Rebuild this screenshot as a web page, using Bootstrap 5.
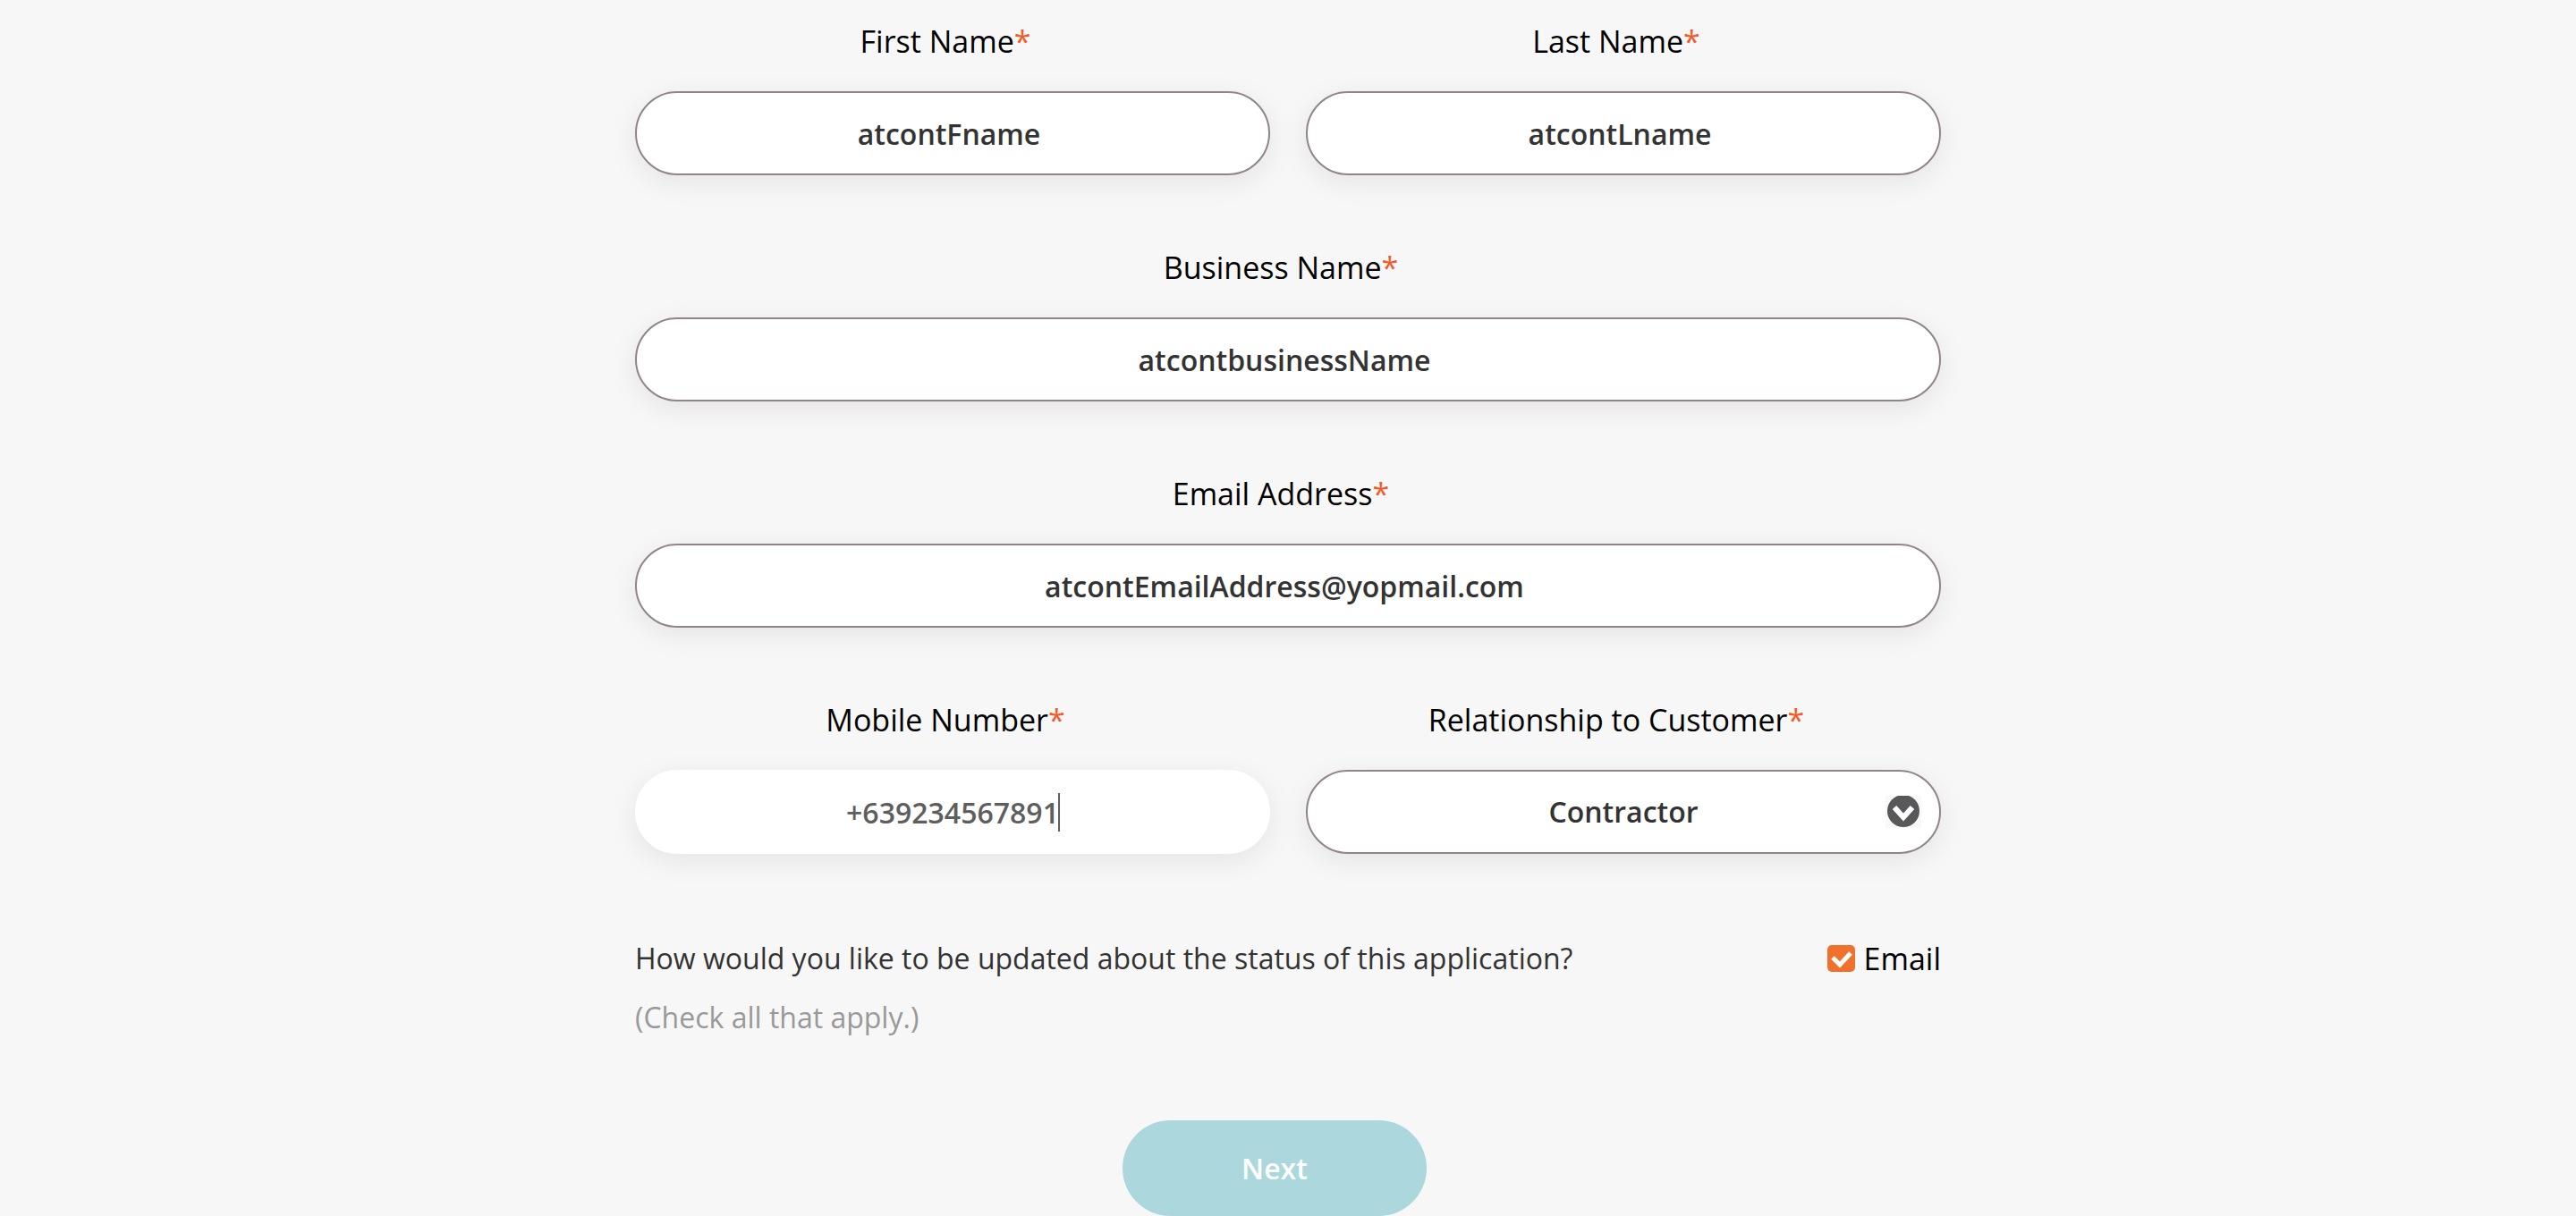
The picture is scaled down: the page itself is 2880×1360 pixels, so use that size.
<!DOCTYPE html>
<html lang="en">
<head>
<meta charset="utf-8">
<meta name="viewport" content="width=device-width, initial-scale=1">
<title>Applicant details</title>
<link rel="stylesheet" href="https://cdn.jsdelivr.net/npm/bootstrap@5.3.0/dist/css/bootstrap.min.css">
<style>
  body { background: #f7f7f7; color: #000; font-family: "Open Sans", "Noto Sans", sans-serif; font-size: 32px; line-height: 48px; }
  .form-shell { max-width: 1508px; padding: 22px 24px 0; }
  .field-grid { --bs-gutter-x: 40px; --bs-gutter-y: 79px; }
  .field-label { display: block; margin-bottom: 32px; padding-right: 16px; font-size: 34px; text-align: center; }
  .required { color: #f15a29; }
  .pill-field, .pill-field:focus {
    height: 94px; padding: 0 48px; border: 2px solid #918585; border-radius: 47px; background: #fff;
    box-shadow: 0 8px 32px rgba(0, 0, 0, .08); color: #333; font-size: 32px; font-weight: 600;
    line-height: 48px; text-align: center; text-align-last: center;
  }
  .pill-text { padding-right: 56px; }
  .pill-active, .pill-active:focus { border-color: #fff; color: #5e5e5e; }
  .text-caret { position: absolute; top: 26px; left: calc(50% + 118px); width: 2px; height: 43px; background: #5e5e5e; pointer-events: none; }
  .select-arrow { position: absolute; top: 29px; right: 22px; width: 40px; height: 36px; pointer-events: none; }
  .updates { margin-top: 93px; }
  .question { color: #333; margin-bottom: 18px; }
  .hint { color: #999; }
  .email-option { gap: 10px; font-size: 34px; }
  .email-option .form-check-input { width: 31px; height: 30px; margin: 0; border: 0; border-radius: 5px; background-color: #f0712c; background-size: 31px 30px; }
  .email-option .form-check-input:checked { background-image: url("data:image/svg+xml,%3Csvg xmlns='http://www.w3.org/2000/svg' viewBox='0 0 31 30'%3E%3Cpath d='M6 14l8 8L26 9' fill='none' stroke='%23fff' stroke-width='5'/%3E%3C/svg%3E"); }
  .actions { margin-top: 91px; padding-right: 30px; }
  .next-btn, .next-btn:disabled { width: 340px; height: 107px; border: 0; border-radius: 54px; background: #acd8dd; color: #fff; font-size: 32px; font-weight: 600; opacity: 1; }
</style>
</head>
<body>
<main class="container-fluid form-shell">
  <form>
    <div class="row field-grid">
      <div class="col-6">
        <label class="field-label" for="firstName">First Name<span class="required">*</span></label>
        <input class="form-control pill-field pill-text" id="firstName" type="text" value="atcontFname">
      </div>
      <div class="col-6">
        <label class="field-label" for="lastName">Last Name<span class="required">*</span></label>
        <input class="form-control pill-field pill-text" id="lastName" type="text" value="atcontLname">
      </div>
      <div class="col-12">
        <label class="field-label" for="businessName">Business Name<span class="required">*</span></label>
        <input class="form-control pill-field pill-text" id="businessName" type="text" value="atcontbusinessName">
      </div>
      <div class="col-12">
        <label class="field-label" for="email">Email Address<span class="required">*</span></label>
        <input class="form-control pill-field pill-text" id="email" type="email" value="atcontEmailAddress@yopmail.com">
      </div>
      <div class="col-6">
        <label class="field-label" for="mobile">Mobile Number<span class="required">*</span></label>
        <div class="position-relative">
          <input class="form-control pill-field pill-active" id="mobile" type="tel" value="+639234567891">
          <span class="text-caret"></span>
        </div>
      </div>
      <div class="col-6">
        <label class="field-label" for="relationship">Relationship to Customer<span class="required">*</span></label>
        <div class="position-relative">
          <select class="form-select pill-field" id="relationship">
            <option selected>Contractor</option>
          </select>
          <svg class="select-arrow" viewBox="0 0 40 36" aria-hidden="true">
            <rect width="40" height="36" fill="#f9f9f9"/>
            <circle cx="20" cy="17" r="18" fill="#58585a"/>
            <path d="M10 13L20 24L30 13" fill="none" stroke="#fff" stroke-width="6"/>
          </svg>
        </div>
      </div>
    </div>

    <div class="updates d-flex justify-content-between align-items-start">
      <div>
        <div class="question">How would you like to be updated about the status of this application?</div>
        <div class="hint">(Check all that apply.)</div>
      </div>
      <div class="email-option d-flex align-items-center">
        <input class="form-check-input" id="notifyEmail" type="checkbox" checked>
        <label for="notifyEmail">Email</label>
      </div>
    </div>

    <div class="actions d-flex justify-content-center">
      <button class="btn next-btn" type="submit" disabled>Next</button>
    </div>
  </form>
</main>
<script src="https://cdn.jsdelivr.net/npm/bootstrap@5.3.0/dist/js/bootstrap.bundle.min.js"></script>
</body>
</html>
